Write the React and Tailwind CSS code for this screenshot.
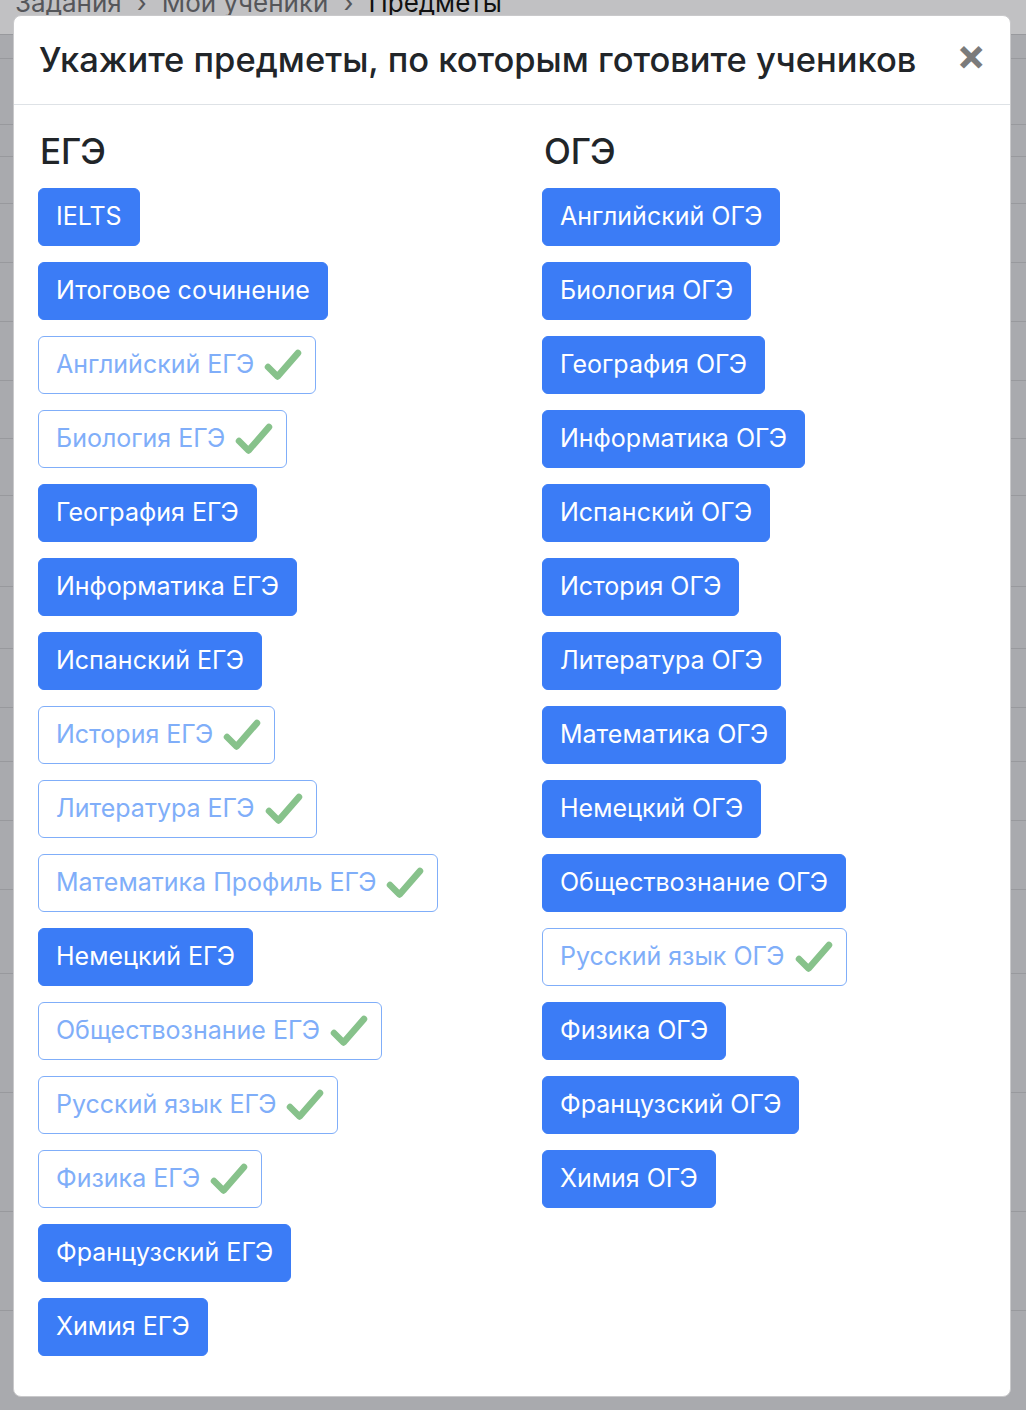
import React from "react";

const ege = [
  ["IELTS", false],
  ["Итоговое сочинение", false],
  ["Английский ЕГЭ", true],
  ["Биология ЕГЭ", true],
  ["География ЕГЭ", false],
  ["Информатика ЕГЭ", false],
  ["Испанский ЕГЭ", false],
  ["История ЕГЭ", true],
  ["Литература ЕГЭ", true],
  ["Математика Профиль ЕГЭ", true],
  ["Немецкий ЕГЭ", false],
  ["Обществознание ЕГЭ", true],
  ["Русский язык ЕГЭ", true],
  ["Физика ЕГЭ", true],
  ["Французский ЕГЭ", false],
  ["Химия ЕГЭ", false],
];

const oge = [
  ["Английский ОГЭ", false],
  ["Биология ОГЭ", false],
  ["География ОГЭ", false],
  ["Информатика ОГЭ", false],
  ["Испанский ОГЭ", false],
  ["История ОГЭ", false],
  ["Литература ОГЭ", false],
  ["Математика ОГЭ", false],
  ["Немецкий ОГЭ", false],
  ["Обществознание ОГЭ", false],
  ["Русский язык ОГЭ", true],
  ["Физика ОГЭ", false],
  ["Французский ОГЭ", false],
  ["Химия ОГЭ", false],
];

function Check() {
  return (
    <svg width="38" height="34" viewBox="0 0 38 34" className="ml-[10px] shrink-0">
      <path d="M4 19 L13.5 28.5 L34 5" fill="none" stroke="#87c28b" strokeWidth="6.5" strokeLinecap="round" strokeLinejoin="round" />
    </svg>
  );
}

function SubjectButton({ label, selected }) {
  if (selected) {
    return (
      <div className="mb-[16px] flex">
        <div className="flex h-[58px] items-center rounded-[6px] border-[1.5px] border-[#80aef9] bg-white pl-[17px] pr-[13px] text-[25px] text-[#80aef9]">
          <span>{label}</span>
          <Check />
        </div>
      </div>
    );
  }
  return (
    <div className="mb-[16px] flex">
      <div className="flex h-[58px] items-center rounded-[6px] border-[1.5px] border-[#3b7cf6] bg-[#3b7cf6] px-[17px] text-[25px] text-white">
        {label}
      </div>
    </div>
  );
}

function BgRows() {
  const lines = [35, 60, 127, 160, 208, 268, 328, 388, 447, 505, 597, 660, 720, 775, 835, 905, 990, 1110, 1230, 1330];
  const rows = [];
  let prev = 0;
  lines.forEach((y, i) => {
    rows.push(
      <div
        key={i}
        className={`border-b border-[#98999d] ${i === 0 ? "bg-[#c1c1c3]" : ""}`}
        style={{ height: y - prev }}
      />
    );
    prev = y + 1;
  });
  return <div className="flex flex-col">{rows}</div>;
}

export default function App() {
  return (
    <div
      className="relative h-[1410px] w-[1026px] overflow-hidden bg-[#a9aaae]"
      style={{ fontFamily: "Inter, 'Noto Sans', sans-serif" }}
    >
      <BgRows />
      <div className="absolute left-0 top-[-13px] flex gap-[15px] px-[15px] text-[26px] leading-[32px] text-[#55565a]">
        <span>Задания</span>
        <span>›</span>
        <span>Мои ученики</span>
        <span>›</span>
        <span className="text-[#111]">Предметы</span>
      </div>

      <div className="absolute left-[13px] top-[15px] w-[998px] rounded-[8px] border border-[#c9c9cb] bg-white">
        <div className="flex h-[89px] items-center justify-between border-b-[1.5px] border-[#dee2e6] pl-[25px] pr-[24px]">
          <h5 className="text-[34.5px] font-medium leading-none text-[#212529]">
            Укажите предметы, по которым готовите учеников
          </h5>
          <span className="mt-[-12px] text-[44px] font-bold leading-none text-[#7b7b7b]">×</span>
        </div>
        <div className="grid grid-cols-[504px_1fr] px-[24px] pb-[24px] pt-[23px]">
          <div>
            <h3 className="mb-[14px] pl-[2px] text-[35px] font-medium leading-[46px] text-[#212529]">ЕГЭ</h3>
            {ege.map(([l, s]) => (
              <SubjectButton key={l} label={l} selected={s} />
            ))}
          </div>
          <div>
            <h3 className="mb-[14px] pl-[2px] text-[35px] font-medium leading-[46px] text-[#212529]">ОГЭ</h3>
            {oge.map(([l, s]) => (
              <SubjectButton key={l} label={l} selected={s} />
            ))}
          </div>
        </div>
      </div>
    </div>
  );
}
